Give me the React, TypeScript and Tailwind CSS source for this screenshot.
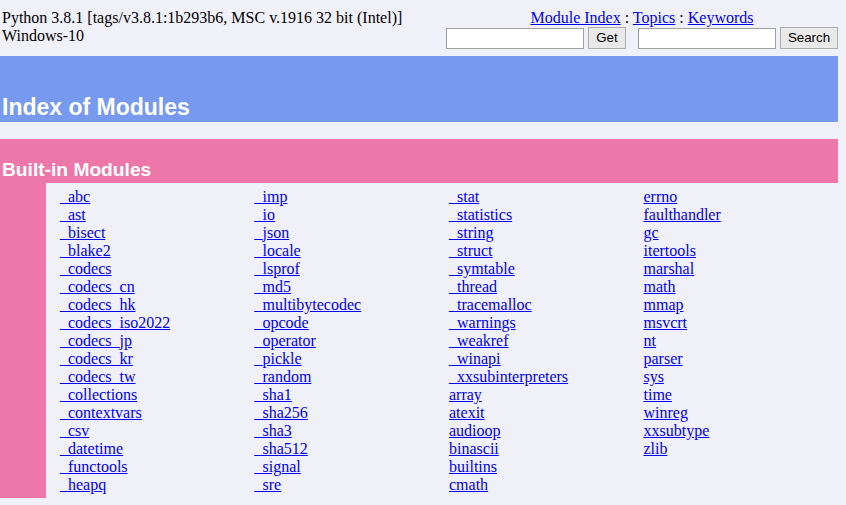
import React from "react";

const cols: string[][] = [
  ["_abc", "_ast", "_bisect", "_blake2", "_codecs", "_codecs_cn", "_codecs_hk", "_codecs_iso2022", "_codecs_jp", "_codecs_kr", "_codecs_tw", "_collections", "_contextvars", "_csv", "_datetime", "_functools", "_heapq"],
  ["_imp", "_io", "_json", "_locale", "_lsprof", "_md5", "_multibytecodec", "_opcode", "_operator", "_pickle", "_random", "_sha1", "_sha256", "_sha3", "_sha512", "_signal", "_sre"],
  ["_stat", "_statistics", "_string", "_struct", "_symtable", "_thread", "_tracemalloc", "_warnings", "_weakref", "_winapi", "_xxsubinterpreters", "array", "atexit", "audioop", "binascii", "builtins", "cmath"],
  ["errno", "faulthandler", "gc", "itertools", "marshal", "math", "mmap", "msvcrt", "nt", "parser", "sys", "time", "winreg", "xxsubtype", "zlib"],
];

export default function App() {
  return (
    <div className="min-h-screen bg-[#f0f0f8] font-['Liberation_Serif',serif] text-[16px] leading-[18px] text-black">
      <div className="flex h-[48px] items-start justify-between pr-[8px]">
        <div className="pl-[2px] pt-[9px]">
          <div>Python 3.8.1 [tags/v3.8.1:1b293b6, MSC v.1916 32 bit (Intel)]</div>
          <div>Windows-10</div>
        </div>
        <div className="flex w-[392px] flex-col items-center pt-[9px]">
          <div>
            <a href="#" className="text-[#0000ee] underline">Module Index</a>
            {" : "}
            <a href="#" className="text-[#0000ee] underline">Topics</a>
            {" : "}
            <a href="#" className="text-[#0000ee] underline">Keywords</a>
          </div>
          <div className="flex w-full items-center justify-end">
            <input className="h-[21px] w-[138px] border border-[#a0a0a0] bg-white px-[2px] text-[13px] outline-none" />
            <button className="ml-[4px] h-[22px] w-[38px] border border-[#adadad] bg-[#e9e9e9] font-['Liberation_Sans',sans-serif] text-[13.33px] leading-none text-black">
              Get
            </button>
            <input className="ml-[12px] h-[21px] w-[138px] border border-[#a0a0a0] bg-white px-[2px] text-[13px] outline-none" />
            <button className="ml-[4px] h-[22px] w-[58px] border border-[#adadad] bg-[#e9e9e9] font-['Liberation_Sans',sans-serif] text-[13.33px] leading-none text-black">
              Search
            </button>
          </div>
        </div>
      </div>

      <div className="mr-[8px] mt-[8px] flex h-[66px] items-end bg-[#7799ee] pb-[2px] pl-[2px]">
        <h1 className="font-['Liberation_Sans',sans-serif] text-[23px] font-bold leading-[26px] text-white">
          Index of Modules
        </h1>
      </div>

      <div className="mr-[8px] mt-[17px]">
        <div className="flex h-[44px] items-end bg-[#ee77aa] pb-[3px] pl-[2px]">
          <h2 className="font-['Liberation_Sans',sans-serif] text-[19.2px] font-bold leading-[21px] text-white">
            Built-in Modules
          </h2>
        </div>
        <div className="flex">
          <div className="w-[46px] shrink-0 bg-[#ee77aa]" />
          <div className="grid flex-1 grid-cols-4 pb-[4px] pl-[14px] pt-[5px]">
            {cols.map((c, i) => (
              <div key={i} className="flex flex-col items-start">
                {c.map((m) => (
                  <a key={m} href="#" className="text-[#0000ee] underline">
                    {m}
                  </a>
                ))}
              </div>
            ))}
          </div>
        </div>
      </div>
    </div>
  );
}
